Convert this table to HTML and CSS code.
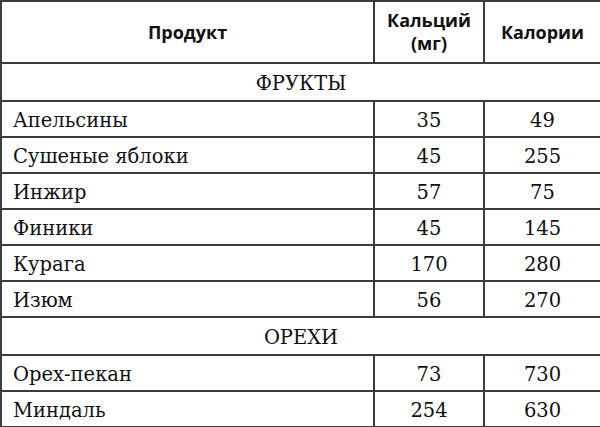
FILE: index.html
```html
<!DOCTYPE html>
<html lang="ru">
<head>
<meta charset="utf-8">
<link rel="stylesheet" href="styles.css">
</head>
<body>
<table class="nutri">
  <colgroup>
    <col class="c-name">
    <col class="c-ca">
    <col class="c-kcal">
  </colgroup>
  <thead>
    <tr class="head">
      <th>Продукт</th>
      <th>Кальций<br>(мг)</th>
      <th>Калории</th>
    </tr>
  </thead>
  <tbody>
    <tr class="group"><td colspan="3">ФРУКТЫ</td></tr>
    <tr><td class="name">Апельсины</td><td>35</td><td>49</td></tr>
    <tr><td class="name">Сушеные яблоки</td><td>45</td><td>255</td></tr>
    <tr><td class="name">Инжир</td><td>57</td><td>75</td></tr>
    <tr><td class="name">Финики</td><td>45</td><td>145</td></tr>
    <tr><td class="name">Курага</td><td>170</td><td>280</td></tr>
    <tr><td class="name">Изюм</td><td>56</td><td>270</td></tr>
    <tr class="group"><td colspan="3">ОРЕХИ</td></tr>
    <tr><td class="name">Орех-пекан</td><td>73</td><td>730</td></tr>
    <tr><td class="name">Миндаль</td><td>254</td><td>630</td></tr>
  </tbody>
</table>
</body>
</html>
```
FILE: styles.css
```css
html, body {
  margin: 0;
  padding: 0;
  background: #fff;
}
.nutri {
  border-collapse: collapse;
  table-layout: fixed;
  width: 600px;
  color: #111;
  font-family: "DejaVu Serif", serif;
  font-size: 19.5px;
}
.c-name { width: 373px; }
.c-ca { width: 110px; }
.c-kcal { width: 117px; }
.nutri th, .nutri td {
  border: 2px solid #3c3c3c;
  padding: 3px 12px 0;
  text-align: center;
  vertical-align: middle;
  height: 31px;
  line-height: 24px;
}
.nutri .head th {
  font-family: "Open Sans", "Liberation Sans", sans-serif;
  font-weight: 700;
  font-size: 18px;
  line-height: 23px;
  height: 60px;
  padding: 0 4px;
}
.nutri .group td {
  height: 33px;
}
.nutri td.name {
  text-align: left;
  padding-left: 11px;
}
```
